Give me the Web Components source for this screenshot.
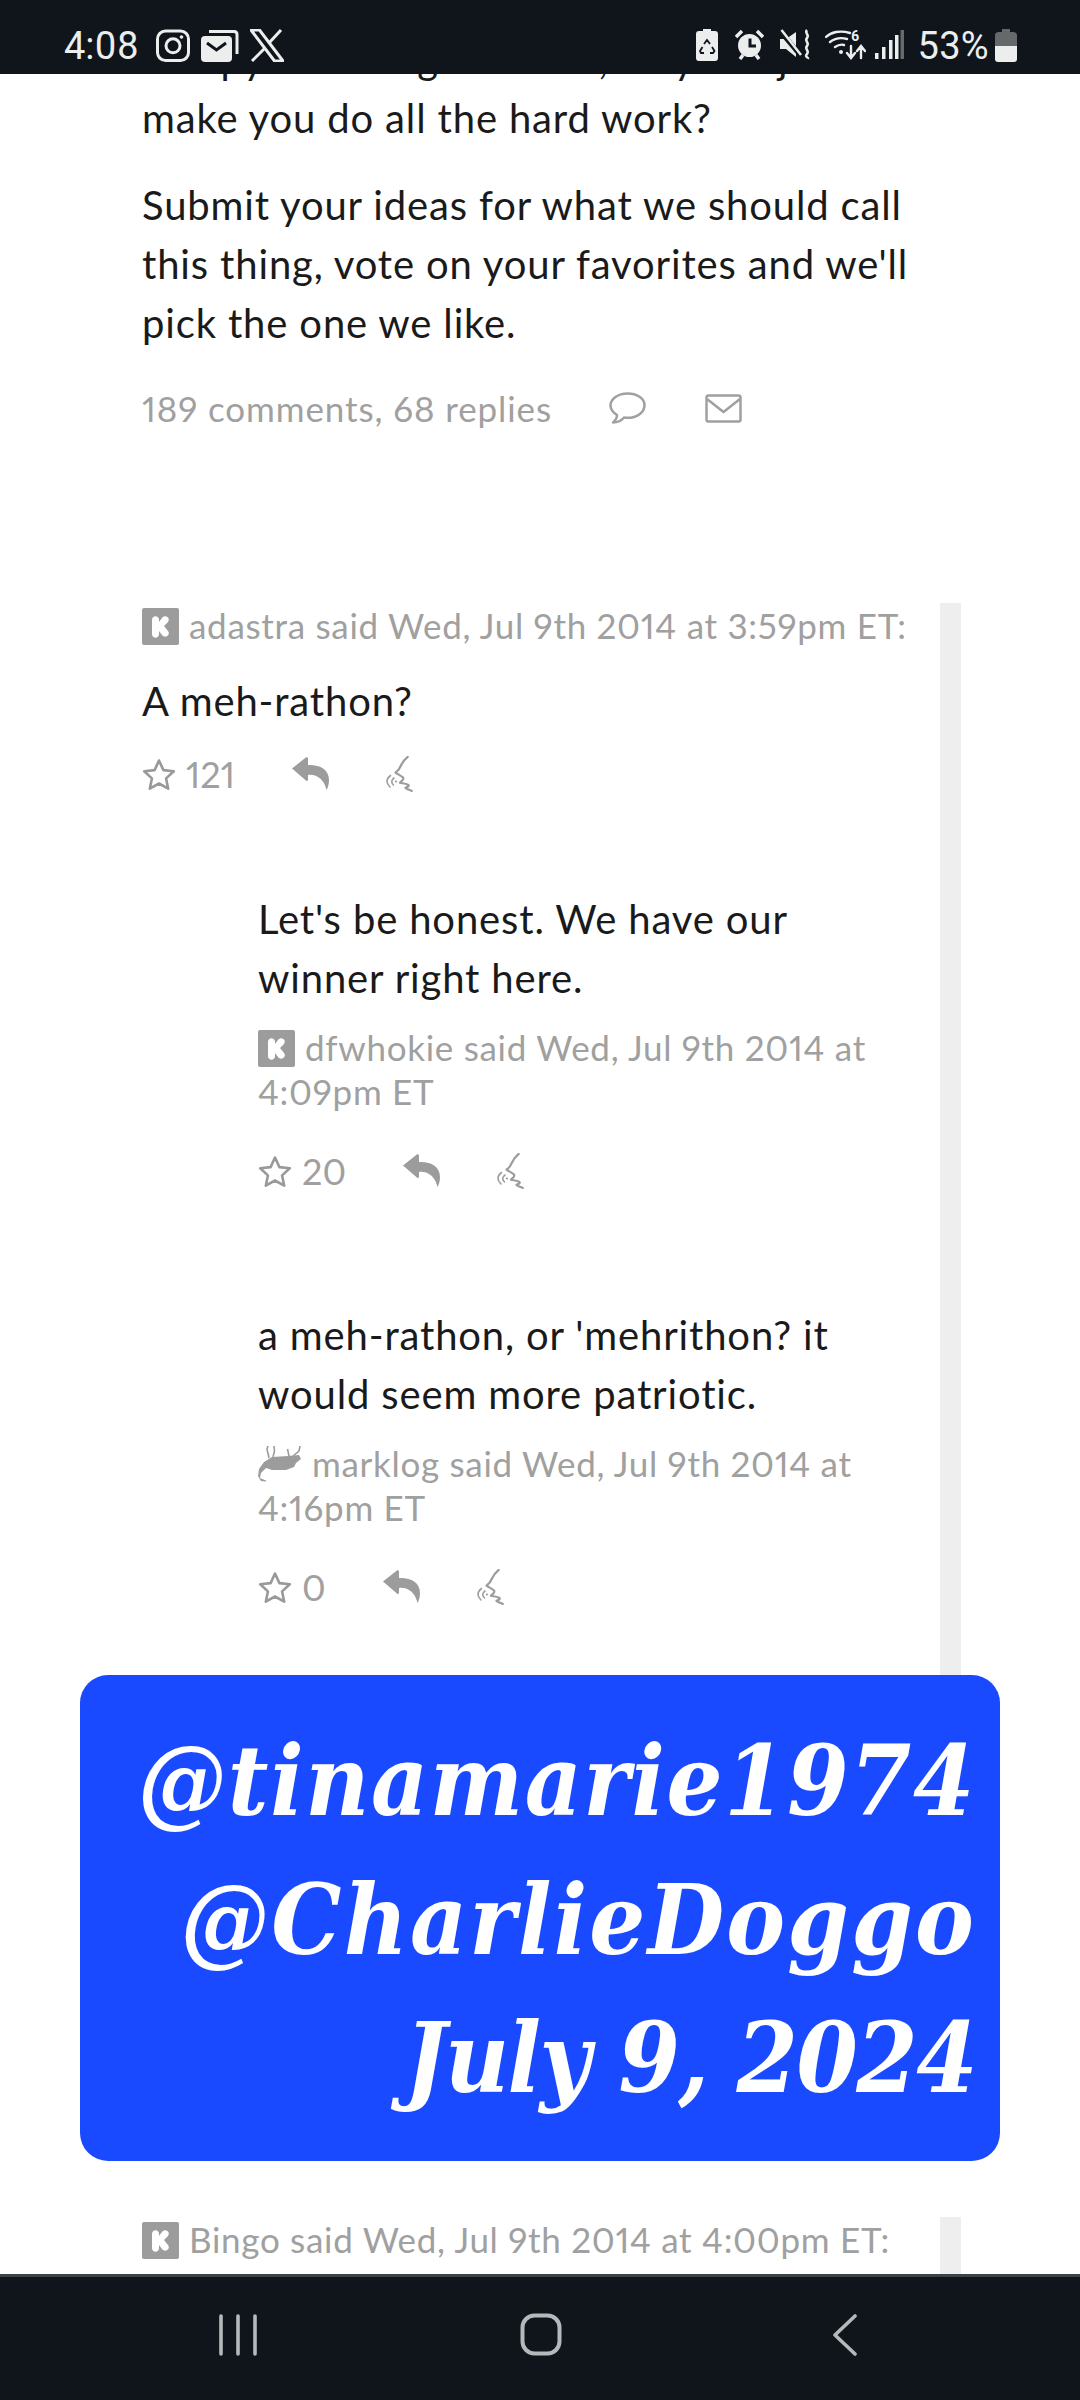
<!DOCTYPE html>
<html>
<head>
<meta charset="utf-8">
<style>
  html, body { margin: 0; padding: 0; background: #fff; }
  body { width: 1080px; height: 2400px; overflow: hidden; }
</style>
</head>
<body>
<phone-screen>
  <status-bar slot="top"></status-bar>
  <post-text>
    <p>creepy so we figured hell, why not just make you do all the hard work?</p>
    <p>Submit your ideas for what we should call this thing, vote on your favorites and we'll pick the one we like.</p>
  </post-text>
  <post-stats>189 comments, 68 replies</post-stats>
  <comment-thread class="first">
    <thread-comment user="adastra" when="Wed, Jul 9th 2014 at 3:59pm ET:" score="121">A meh-rathon?</thread-comment>
    <reply-comment user="dfwhokie" when="Wed, Jul 9th 2014 at 4:09pm ET" score="20">Let's be honest. We have our winner right here.</reply-comment>
    <reply-comment class="later" user="marklog" when="Wed, Jul 9th 2014 at 4:16pm ET" score="0" avatar="deer">a meh-rathon, or 'mehrithon? it would seem more patriotic.</reply-comment>
  </comment-thread>
  <comment-thread class="next">
    <thread-comment user="Bingo" when="Wed, Jul 9th 2014 at 4:00pm ET:" meta-only></thread-comment>
  </comment-thread>
  <credit-banner slot="over"></credit-banner>
  <nav-bar slot="bottom"></nav-bar>
</phone-screen>

<script>
const BODY_FONT = `"Lato", "Open Sans", sans-serif`;

const ICONS = {
  k: `<svg width="37" height="37" viewBox="0 0 37 37"><rect width="37" height="37" rx="2" fill="#9c9c9c"/><path d="M10 12c0-5 7-5 7 0v2l3-4c3-4 9 0 6 4l-4 4 4 5c3 4-3 8-6 4l-3-4v3c0 5-7 5-7 0z" fill="#fff"/></svg>`,
  deer: `<svg width="44" height="36" viewBox="0 0 44 36"><path d="M6 16 14 11 30 10 41 9 43 13 38 17 36 21 28 24 14 24 8 22 3 27 2 32 8 34.500 8 35.500 3 35 0 30 1 23Z" fill="#9c9c9c"/><path d="M11 12 9 3 10 0M15 11 16.500 5 16 0M31 10 29.500 3M35 10 41 5 42 0" stroke="#9c9c9c" stroke-width="1.600" fill="none"/></svg>`,
  star: `<svg width="34" height="32" viewBox="0 0 34 32"><path d="M17 2.500l4.400 9.600 10.400 1.200-7.700 7.100 2.100 10.300L17 25.500 7.800 30.700l2.100-10.300L2.200 13.300l10.400-1.200z" fill="none" stroke="#999" stroke-width="2.600" stroke-linejoin="round"/></svg>`,
  reply: `<svg width="37" height="33" viewBox="0 0 37 33"><path d="M0 11.500 14.500 0 16 1V8C28 7.500 37 12.500 37 23 37 27 36 30.500 34.500 33 33 26 29 20.500 23 18.500 20.500 17.800 18 17.500 16 18V23.500L14.500 24Z" fill="#9c9c9c"/></svg>`,
  whisper: `<svg width="27" height="36" viewBox="0 0 27 36" fill="none" stroke="#9c9c9c" stroke-linecap="round" stroke-linejoin="round"><path d="M21.700 .8C18 4 16 7 15 9.500 14 12 12.500 14.500 9.500 16.700 12 18.500 15 19.500 17 21.500 18.500 23.500 15.500 25 14 26.700 16 27.500 19 27 22 28.800 24 30 21.500 31 19.500 31.800 21.500 33.500 24 34 25.800 35" stroke-width="2.200"/><path d="M4.500 19.500C2.500 21 1 23.500 1 25.500 1 27.500 2.500 29.500 4 31M8 22C6.500 23 5.700 24.500 5.700 25.800 5.700 27 6.500 28 7.500 29" stroke-width="1.600"/><circle cx="10" cy="25.500" r="1.100" fill="#9c9c9c" stroke="none"/></svg>`
};

class PhoneScreen extends HTMLElement {
  constructor() {
    super();
    this.attachShadow({ mode: "open" });
    this.shadowRoot.innerHTML = `
      <style>
        :host { display: flex; flex-direction: column; position: relative; width: 1080px; height: 2400px; overflow: hidden; background: #fff; font-family: ${BODY_FONT}; font-variant-numeric: proportional-nums; }
        main { flex: 1; min-height: 0; overflow: hidden; }
        .scroll { margin-top: -44px; }
      </style>
      <slot name="top"></slot>
      <main><div class="scroll"><slot></slot></div></main>
      <slot name="over"></slot>
      <slot name="bottom"></slot>
    `;
  }
}

class StatusBar extends HTMLElement {
  constructor() {
    super();
    this.attachShadow({ mode: "open" });
    this.shadowRoot.innerHTML = `
      <style>
        :host { display: flex; align-items: flex-start; justify-content: space-between; box-sizing: border-box; height: 74px; padding: 29px 63px 0 64px; background: #0f151b; color: #eceded; font-family: Roboto, sans-serif; font-size: 38px; line-height: 34px; position: relative; z-index: 2; }
        .side { display: flex; align-items: flex-start; }
        svg { display: block; }
        .time { margin-right: 17px; }
        .pct { margin-left: 14px; margin-right: 6px; letter-spacing: .3px; }
      </style>
      <div class="side">
        <span class="time">4:08</span>
        <svg width="34" height="33" viewBox="0 0 34 33" fill="none" stroke="#eceded" stroke-width="3"><rect x="1.500" y="2" width="31" height="29.500" rx="8"/><circle cx="17" cy="16.800" r="7"/><circle cx="25.500" cy="8" r="1.800" fill="#eceded" stroke="none"/></svg>
        <svg style="margin-left:11px" width="38" height="33" viewBox="0 0 38 33"><path d="M8 2.500h25c1.500 0 3 1 3 3V25" fill="none" stroke="#eceded" stroke-width="3"/><rect x="0" y="7" width="31" height="26" rx="4" fill="#eceded"/><path d="M6 14l9.500 7L25 14" fill="none" stroke="#0f151b" stroke-width="3"/></svg>
        <svg style="margin-left:11px" width="34" height="33" viewBox="0 0 34 33" fill="none"><path d="M1 1h8.500L33 32h-8.500z" stroke="#eceded" stroke-width="3"/><path d="M31 1 19 14M15 19 2 32" stroke="#eceded" stroke-width="3"/></svg>
      </div>
      <div class="side">
        <svg width="22" height="32" viewBox="0 0 22 32"><path d="M7 0h8v2h4c2 0 3 1 3 3v24c0 2-1 3-3 3H3c-2 0-3-1-3-3V5c0-2 1-3 3-3h4z" fill="#eceded"/><path d="M8 15l3-4 3 4M16 18l2.500 4-1.500 2h-3M8 24H5l-1-2 2.500-4" fill="none" stroke="#0f151b" stroke-width="1.800"/></svg>
        <svg style="margin-left:17px" width="29" height="31" viewBox="0 0 29 31"><circle cx="14.500" cy="16.500" r="11.500" fill="#eceded"/><path d="M15 9.500V17h6" fill="none" stroke="#0f151b" stroke-width="3"/><path d="M1 8 7 2M28 8 22 2M5 30l3-4M24 30l-3-4" stroke="#eceded" stroke-width="3.500" fill="none"/></svg>
        <svg style="margin-left:16px" width="31" height="31" viewBox="0 0 31 31"><path d="M0 10h6L16 3v25L6 20H0z" fill="#eceded"/><path d="M1 3 21 27" stroke="#0f151b" stroke-width="5"/><path d="M1.500 1 21 26" stroke="#eceded" stroke-width="2.500"/><path d="M27 1c-3 3 3 5 0 8s3 5 0 8 3 5 0 8 2 3 1 5" fill="none" stroke="#eceded" stroke-width="2.500"/></svg>
        <svg style="margin-left:14px" width="41" height="31" viewBox="0 0 41 31" fill="none" stroke="#eceded" stroke-width="2.400" stroke-linecap="round"><path d="M1 8C6 3 15 1 25 4M5 13c4-3 10-5 17-3M10 18c3-2 6-3 9-2"/><circle cx="16" cy="23" r="2" fill="#eceded" stroke="none"/><text x="26" y="12" font-family="Roboto, sans-serif" font-size="14" font-weight="700" fill="#eceded" stroke="none">6</text><path d="M26 17v11M22 24l4 5 4-5M36 29V18M32 22l4-5 4 5"/></svg>
        <svg style="margin-left:9px" width="29" height="31" viewBox="0 0 29 31"><rect x="0" y="24" width="3.500" height="6" fill="#eceded"/><rect x="7" y="18" width="3.500" height="12" fill="#eceded"/><rect x="14" y="11" width="3.500" height="19" fill="#eceded"/><rect x="20" y="6" width="3.500" height="24" fill="#eceded"/><rect x="25.500" y="1" width="3.500" height="29" fill="#666a6d"/></svg>
        <span class="pct">53%</span>
        <svg width="22" height="33" viewBox="0 0 22 33"><path d="M7 0h8v3h3c2 0 4 1 4 3v11H0V6c0-2 2-3 4-3h3z" fill="#66696c"/><path d="M0 17h22v13c0 2-1 3-3 3H3c-2 0-3-1-3-3z" fill="#eceded"/></svg>
      </div>
    `;
  }
}

class NavBar extends HTMLElement {
  constructor() {
    super();
    this.attachShadow({ mode: "open" });
    this.shadowRoot.innerHTML = `
      <style>
        :host { display: flex; box-sizing: border-box; height: 126px; background: #0f151a; border-top: 3px solid #3c4348; position: relative; z-index: 2; padding: 37px 0 0 218px; }
        svg { display: block; }
      </style>
      <svg width="40" height="42" viewBox="0 0 40 42" stroke="#b5b9bb" stroke-width="3.600" stroke-linecap="round"><path d="M3 2v38M20 2v38M37 2v38"/></svg>
      <svg style="margin-left:262px;margin-top:-1px" width="42" height="43" viewBox="0 0 42 43"><rect x="2.500" y="2.500" width="37" height="38" rx="12" fill="none" stroke="#b5b9bb" stroke-width="4"/></svg>
      <svg style="margin-left:270px" width="26" height="42" viewBox="0 0 26 42" fill="none" stroke="#b5b9bb" stroke-width="3.600" stroke-linecap="round" stroke-linejoin="round"><path d="M23 2 3 21l20 19"/></svg>
    `;
  }
}

class PostText extends HTMLElement {
  constructor() {
    super();
    this.attachShadow({ mode: "open" });
    this.shadowRoot.innerHTML = `
      <style>
        :host { display: block; padding: 0 165px 0 142px; color: #1a1a1a; font-size: 40px; letter-spacing: .85px; line-height: 59px; }
        ::slotted(p) { margin: 0 0 28px; }
      </style>
      <slot></slot>
    `;
  }
}

class PostStats extends HTMLElement {
  constructor() {
    super();
    this.attachShadow({ mode: "open" });
    this.shadowRoot.innerHTML = `
      <style>
        :host { display: flex; align-items: center; height: 44px; margin: 33px 0 0 142px; color: #a0a0a0; font-size: 35px; letter-spacing: .9px; }
        svg { display: block; }
        .chat { margin-left: 57px; }
        .mail { margin-left: 59px; }
      </style>
      <span><slot></slot></span>
      <svg class="chat" width="37" height="32" viewBox="0 0 37 32" fill="none" stroke="#a0a0a0" stroke-width="2.500" stroke-linejoin="round"><path d="M18.500 1.500C9 1.500 1.500 7 1.500 13.500c0 4 2.500 7 6.500 9.500 0 3-1 5-4 7.500 5 0 8.500-2 11-5 1 .2 2.500 .3 3.500 .3 9.500 0 17-5.500 17-12.500S28 1.500 18.500 1.500z"/></svg>
      <svg class="mail" width="37" height="29" viewBox="0 0 37 29" fill="none" stroke="#a0a0a0" stroke-width="2.500" stroke-linejoin="round"><rect x="1.500" y="1.500" width="34" height="26" rx="2"/><path d="M2 5l16.500 13L35 5"/></svg>
    `;
  }
}

class CommentThread extends HTMLElement {
  constructor() {
    super();
    this.attachShadow({ mode: "open" });
    this.shadowRoot.innerHTML = `
      <style>
        :host { display: block; box-sizing: border-box; width: 819px; margin-left: 142px; margin-top: 173px; border-right: 21px solid #eeeeee; }
        :host(.first) { padding-bottom: 500px; }
        :host(.next) { margin-top: 112px; padding-bottom: 120px; }
      </style>
      <slot></slot>
    `;
  }
}

// shared bits for both comment layouts
function metaLine(el) {
  const user = el.getAttribute("user");
  const when = el.getAttribute("when");
  const icon = el.getAttribute("avatar") === "deer" ? ICONS.deer : ICONS.k;
  return `<div class="meta"><span class="ava">${icon}</span>${user} said ${when}</div>`;
}

function actionRow(el) {
  return `<div class="acts">${ICONS.star}<span class="score">${el.getAttribute("score")}</span><span class="reply">${ICONS.reply}</span><span class="whisper">${ICONS.whisper}</span></div>`;
}

const COMMENT_CSS = `
  .meta { color: #a0a0a0; font-size: 35px; letter-spacing: .7px; line-height: 44px; }
  .ava { display: inline-block; vertical-align: -6px; margin-right: 10px; height: 37px; }
  .ava svg { display: block; }
  .body { color: #1a1a1a; font-size: 40px; letter-spacing: .85px; line-height: 59px; }
  .acts { display: flex; align-items: center; color: #a0a0a0; font-size: 36px; height: 37px; }
  .acts svg { display: block; }
  .score { margin-left: 10px; }
  .reply { margin-left: 57px; }
  .whisper { margin-left: 57px; }
`;

class ThreadComment extends HTMLElement {
  connectedCallback() {
    if (this.shadowRoot) return;
    this.attachShadow({ mode: "open" });
    const metaOnly = this.hasAttribute("meta-only");
    this.shadowRoot.innerHTML = `
      <style>
        :host { display: block; }
        ${COMMENT_CSS}
        .body { margin-top: 25px; }
        .acts { margin-top: 24px; }
      </style>
      ${metaLine(this)}
      ${metaOnly ? "" : `<div class="body"><slot></slot></div>${actionRow(this)}`}
    `;
  }
}

class ReplyComment extends HTMLElement {
  connectedCallback() {
    if (this.shadowRoot) return;
    this.attachShadow({ mode: "open" });
    this.shadowRoot.innerHTML = `
      <style>
        :host { display: block; padding: 0 50px 0 116px; margin-top: 98px; }
        :host(.later) { margin-top: 117px; }
        ${COMMENT_CSS}
        .meta { margin-top: 17px; }
        .acts { margin-top: 39px; }
      </style>
      <div class="body"><slot></slot></div>
      ${metaLine(this)}
      ${actionRow(this)}
    `;
  }
}

class CreditBanner extends HTMLElement {
  constructor() {
    super();
    this.attachShadow({ mode: "open" });
    this.shadowRoot.innerHTML = `
      <style>
        :host { position: absolute; left: 80px; top: 1675px; width: 920px; height: 486px; box-sizing: border-box; padding: 37px 24px 0 0; background: #1a4aff; border-radius: 28px; color: #fff; font-family: "DejaVu Serif", "Liberation Serif", serif; font-style: italic; font-weight: 700; font-stretch: condensed; font-size: 98px; line-height: 138.500px; text-align: right; white-space: nowrap; }
        .a { letter-spacing: 1.600px; }
        .b { letter-spacing: 2.200px; }
        .c { letter-spacing: -1.500px; }
      </style>
      <div class="a">@tinamarie1974</div>
      <div class="b">@CharlieDoggo</div>
      <div class="c">July 9, 2024</div>
    `;
  }
}

customElements.define("phone-screen", PhoneScreen);
customElements.define("status-bar", StatusBar);
customElements.define("nav-bar", NavBar);
customElements.define("post-text", PostText);
customElements.define("post-stats", PostStats);
customElements.define("comment-thread", CommentThread);
customElements.define("thread-comment", ThreadComment);
customElements.define("reply-comment", ReplyComment);
customElements.define("credit-banner", CreditBanner);
</script>
</body>
</html>
